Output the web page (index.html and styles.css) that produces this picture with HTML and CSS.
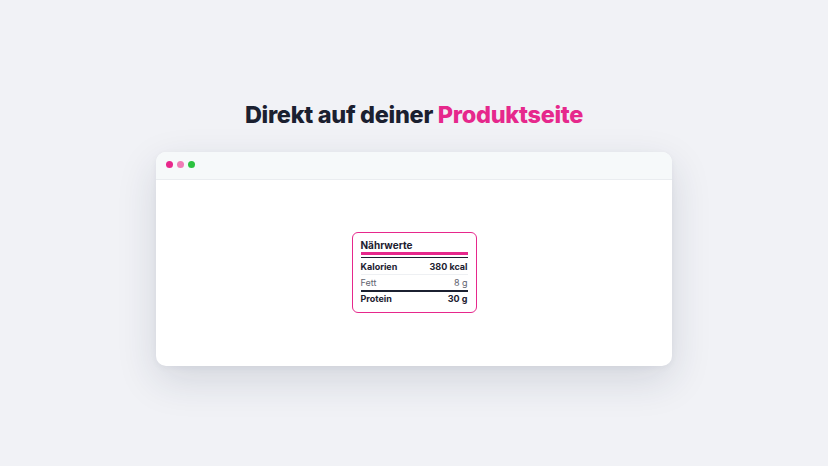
FILE: index.html
```html
<!DOCTYPE html>
<html lang="de">
<head>
  <meta charset="UTF-8">
  <meta name="viewport" content="width=device-width, initial-scale=1.0">
  <title>Direkt auf deiner Produktseite</title>
  <link rel="stylesheet" href="styles.css">
</head>
<body>
  <main class="stage">
    <h1 class="headline">Direkt auf deiner <span class="accent">Produktseite</span></h1>

    <div class="browser">
      <div class="browser-bar">
        <span class="dot dot-red"></span>
        <span class="dot dot-pink"></span>
        <span class="dot dot-green"></span>
      </div>
      <div class="browser-body">
        <!-- Nutrition label widget -->
        <div class="label">
          <div class="label-title">Nährwerte</div>
          <div class="label-row bold first">
            <span>Kalorien</span><span>380 kcal</span>
          </div>
          <div class="label-row light">
            <span>Fett</span><span>8 g</span>
          </div>
          <div class="label-row bold last">
            <span>Protein</span><span>30 g</span>
          </div>
        </div>
      </div>
    </div>
  </main>
</body>
</html>
```

FILE: styles.css
```css
/* Base */
body {
  margin: 0;
  min-height: 100vh;
  background: #f1f2f6;
  font-family: 'Inter', 'Noto Sans', sans-serif;
  color: #1b2030;
}

.stage {
  min-height: 100vh;
  display: flex;
  flex-direction: column;
  align-items: center;
  justify-content: center;
}

/* Headline */
.headline {
  margin: 0 0 23px;
  font-size: 23.5px;
  font-weight: 800;
  line-height: 28px;
  letter-spacing: -0.3px;
  color: #1b2030;
}

.accent {
  color: #e6288c;
}

/* Browser mockup */
.browser {
  width: 516px;
  background: #fff;
  border-radius: 10px;
  overflow: hidden;
  box-shadow: 0 14px 40px rgba(30, 40, 70, 0.14), 0 2px 6px rgba(30, 40, 70, 0.05);
}

.browser-bar {
  height: 28px;
  box-sizing: border-box;
  display: flex;
  align-items: center;
  gap: 4px;
  padding: 0 0 1px 10px;
  background: #f6f9fa;
  border-bottom: 1px solid #eaedf0;
}

.dot {
  width: 7px;
  height: 7px;
  border-radius: 50%;
}

.dot-red { background: #e8288c; }
.dot-pink { background: #f07cb6; }
.dot-green { background: #2cc240; }

.browser-body {
  height: 186px;
  display: flex;
  align-items: center;
  justify-content: center;
}

/* Nutrition label */
.label {
  width: 107px;
  padding: 5.5px 8px 8.5px;
  border: 1.5px solid #e6288c;
  border-radius: 6px;
  font-size: 9px;
  color: #1b2030;
}

.label-title {
  font-size: 10px;
  font-weight: 700;
  line-height: 12px;
  padding-bottom: 1px;
  border-bottom: 3px solid #e6288c;
}

.label-row {
  display: flex;
  justify-content: space-between;
  line-height: 11px;
  padding: 2px 0;
}

.label-row.bold {
  font-weight: 700;
}

.label-row.light {
  color: #5f6470;
  font-weight: 400;
}

.label-row.first {
  margin-top: 2px;
  padding-top: 3px;
  border-top: 1px solid #1b2030;
  border-bottom: 1px solid #eef0f3;
}

.label-row.last {
  padding: 1px 0 0;
  border-top: 2px solid #1b2030;
}
```
